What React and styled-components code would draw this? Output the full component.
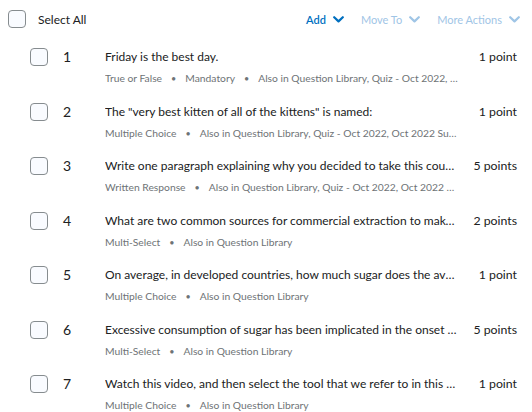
import styled, { createGlobalStyle } from "styled-components";

const questions = [
  {
    title: "Friday is the best day.",
    meta: ["True or False", "Mandatory", "Also in Question Library, Quiz - Oct 2022, Oct 2022 Summer Quiz"],
    points: "1 point",
  },
  {
    title: 'The "very best kitten of all of the kittens" is named:',
    meta: ["Multiple Choice", "Also in Question Library, Quiz - Oct 2022, Oct 2022 Summer Quiz"],
    points: "1 point",
  },
  {
    title: "Write one paragraph explaining why you decided to take this course and what you hope to learn",
    meta: ["Written Response", "Also in Question Library, Quiz - Oct 2022, Oct 2022 Summer Quiz"],
    points: "5 points",
  },
  {
    title: "What are two common sources for commercial extraction to make sugar?",
    meta: ["Multi-Select", "Also in Question Library"],
    points: "2 points",
  },
  {
    title: "On average, in developed countries, how much sugar does the average person consume per day?",
    meta: ["Multiple Choice", "Also in Question Library"],
    points: "1 point",
  },
  {
    title: "Excessive consumption of sugar has been implicated in the onset of which diseases?",
    meta: ["Multi-Select", "Also in Question Library"],
    points: "5 points",
  },
  {
    title: "Watch this video, and then select the tool that we refer to in this demonstration",
    meta: ["Multiple Choice", "Also in Question Library"],
    points: "1 point",
  },
];

const GlobalStyle = createGlobalStyle`
  body {
    margin: 0;
    background: #ffffff;
    font-family: Lato, "Open Sans", sans-serif;
    color: #202122;
  }
`;

function Chevron({ color }) {
  return (
    <svg width="11" height="7" viewBox="0 0 11 7" aria-hidden="true">
      <path
        d="M1.2 1.2 L5.5 5.4 L9.8 1.2"
        fill="none"
        stroke={color}
        strokeWidth="2.2"
        strokeLinecap="round"
        strokeLinejoin="round"
      />
    </svg>
  );
}

function Action({ label, disabled }) {
  const color = disabled ? "#9fc5e6" : "#006fbf";
  return (
    <ActionButton $color={color} $strong={!disabled}>
      {label}
      <Chevron color={color} />
    </ActionButton>
  );
}

function QuestionRow({ index, question }) {
  return (
    <Row>
      <Box />
      <Number>{index}</Number>
      <Body>
        <Title>{question.title}</Title>
        <Meta>
          {question.meta.map((m, i) => (
            <span key={i}>
              {i > 0 && <Dot>•</Dot>}
              {m}
            </span>
          ))}
        </Meta>
      </Body>
      <Points>{question.points}</Points>
    </Row>
  );
}

export default function App() {
  return (
    <>
      <GlobalStyle />
      <Page>
        <Toolbar>
          <SelectAll>
            <Box />
            <span>Select All</span>
          </SelectAll>
          <Actions>
            <Action label="Add" />
            <Action label="Move To" disabled />
            <Action label="More Actions" disabled />
          </Actions>
        </Toolbar>
        <List>
          {questions.map((q, i) => (
            <QuestionRow key={i} index={i + 1} question={q} />
          ))}
        </List>
      </Page>
    </>
  );
}

const Page = styled.div`
  width: 532px;
  height: 412px;
  overflow: hidden;
`;

const Toolbar = styled.div`
  display: flex;
  align-items: center;
  justify-content: space-between;
  height: 38px;
  padding: 0 12px 0 8px;
`;

const SelectAll = styled.label`
  display: flex;
  align-items: center;
  gap: 12px;
  font-size: 12px;
  color: #202122;
`;

const Box = styled.span`
  flex: none;
  box-sizing: border-box;
  width: 18px;
  height: 18px;
  border: 1px solid #868c8f;
  border-radius: 4px;
  background: #f9fbff;
`;

const Actions = styled.div`
  display: flex;
  align-items: center;
  gap: 17px;
`;

const ActionButton = styled.button`
  display: flex;
  align-items: center;
  gap: 7px;
  border: none;
  background: none;
  padding: 0;
  font-family: inherit;
  font-size: 11px;
  font-weight: ${(p) => (p.$strong ? 600 : 400)};
  color: ${(p) => p.$color};
`;

const List = styled.div`
  display: flex;
  flex-direction: column;
`;

const Row = styled.div`
  display: flex;
  align-items: flex-start;
  height: 54.5px;
  padding: 10px 15px 0 30px;
  box-sizing: border-box;
`;

const Number = styled.span`
  flex: none;
  width: 42px;
  margin-left: 15px;
  font-size: 14px;
  line-height: 18px;
  color: #202122;
`;

const Body = styled.div`
  flex: none;
  width: 353px;
  min-width: 0;
`;

const Title = styled.div`
  font-size: 12px;
  line-height: 18px;
  white-space: nowrap;
  overflow: hidden;
  text-overflow: ellipsis;
`;

const Meta = styled.div`
  margin-top: 5px;
  font-size: 10.3px;
  line-height: 14px;
  color: #6e7376;
  white-space: nowrap;
  overflow: hidden;
  text-overflow: ellipsis;
`;

const Dot = styled.span`
  display: inline-block;
  margin: 0 9px;
  font-size: 9px;
`;

const Points = styled.span`
  flex: 1;
  text-align: right;
  white-space: nowrap;
  font-size: 12.3px;
  line-height: 18px;
  color: #202122;
`;
